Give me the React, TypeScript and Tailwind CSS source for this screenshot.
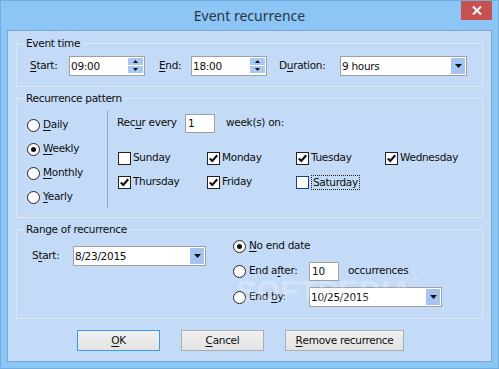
import React from "react";

const U = ({ children }: { children: React.ReactNode }) => (
  <span className="underline underline-offset-[2px] decoration-[1px]">{children}</span>
);

const Radio = ({ checked = false }: { checked?: boolean }) => (
  <span className="w-[13px] h-[13px] shrink-0 rounded-full border border-[#222] bg-white flex items-center justify-center">
    {checked && <span className="w-[5px] h-[5px] rounded-full bg-[#111]" />}
  </span>
);

const Check = ({ checked = false, focus = false }: { checked?: boolean; focus?: boolean }) => (
  <span
    className={`w-[13px] h-[13px] shrink-0 border bg-white flex items-center justify-center ${
      focus ? "border-[#1c3f94]" : "border-[#222]"
    }`}
  >
    {checked && (
      <svg width="11" height="11" viewBox="0 0 11 11">
        <path d="M1.8 5.4 L4.3 8 L9.2 2.2" fill="none" stroke="#111" strokeWidth="2.1" />
      </svg>
    )}
  </span>
);

const Arrow = ({ up = false, w = 7, h = 4 }: { up?: boolean; w?: number; h?: number }) => (
  <svg width={w} height={h} viewBox={`0 0 ${w} ${h}`}>
    {up ? (
      <polygon points={`0,${h} ${w},${h} ${w / 2},0`} fill="#111" />
    ) : (
      <polygon points={`0,0 ${w},0 ${w / 2},${h}`} fill="#111" />
    )}
  </svg>
);

const SpinBox = ({ value }: { value: string }) => (
  <div className="w-[76px] h-[20px] border border-[#a0a0a0] bg-white flex items-stretch">
    <span className="flex-1 pl-[1px] leading-[18px]">{value}</span>
    <div className="w-[15px] mr-[1px] pt-[1px] flex flex-col gap-[1px]">
      <span className="h-[7px] bg-[#a9c9f3] flex items-center justify-center">
        <Arrow up w={5} h={3} />
      </span>
      <span className="h-[7px] bg-[#a9c9f3] flex items-center justify-center">
        <Arrow w={5} h={3} />
      </span>
    </div>
  </div>
);

const Combo = ({ value, w }: { value: string; w: string }) => (
  <div className={`${w} h-[20px] border border-[#a0a0a0] bg-white flex items-stretch`}>
    <span className="flex-1 pl-[1px] leading-[18px]">{value}</span>
    <span className="w-[14px] my-[1px] mr-[1px] bg-[#a5c4f2] flex items-center justify-center">
      <Arrow w={7} h={4} />
    </span>
  </div>
);

const TextBox = ({ value, w }: { value: string; w: string }) => (
  <div className={`${w} h-[19px] border border-[#a0a0a0] bg-white pl-[2px] leading-[17px]`}>{value}</div>
);

const Group = ({ title, className, children }: { title: string; className: string; children: React.ReactNode }) => (
  <div className={`relative border border-[#dde7f3] ${className}`}>
    <span className="absolute -top-[8px] left-[7px] px-[2px] bg-[#c4dbf8] leading-[14px]">{title}</span>
    {children}
  </div>
);

const Button = ({ children, w, def = false }: { children: React.ReactNode; w: string; def?: boolean }) => (
  <div
    className={`${w} h-[21px] border bg-gradient-to-b from-[#f0f0f0] to-[#e3e3e3] flex items-center justify-center ${
      def ? "border-[#3c98f0]" : "border-[#acacac]"
    }`}
  >
    {children}
  </div>
);

export default function App() {
  const days: { name: string; checked: boolean; focus?: boolean }[] = [
    { name: "Sunday", checked: false },
    { name: "Monday", checked: true },
    { name: "Tuesday", checked: true },
    { name: "Wednesday", checked: true },
    { name: "Thursday", checked: true },
    { name: "Friday", checked: true },
    { name: "Saturday", checked: false, focus: true },
  ];

  return (
    <div className="relative w-[499px] h-[369px] bg-[#8cc6f6] border border-[#74aedf] flex flex-col overflow-hidden font-['DejaVu_Sans',sans-serif] text-[10.5px] tracking-[-0.3px] text-[#0d0d0d]">
      {/* Title bar */}
      <div className="h-[29px] flex items-center justify-center font-['Noto_Sans',sans-serif] text-[14px] tracking-normal text-[#2a3542]">
        Event recurrence
      </div>
      <div className="absolute -top-[1px] right-[6px] w-[31px] h-[20px] bg-[#c75050] flex items-center justify-center">
        <svg width="10" height="9" viewBox="0 0 10 9">
          <path d="M1 0.5 L9 8.5 M9 0.5 L1 8.5" stroke="#fff" strokeWidth="2" />
        </svg>
      </div>

      {/* Client area */}
      <div className="relative flex-1 mx-[6px] mb-[6px] border border-[#7ba4d2] bg-[#c4dbf8] px-[8px] pt-[12px] flex flex-col">
        {/* Event time */}
        <Group title="Event time" className="h-[44px] pt-[12px] pl-[13px]">
          <div className="flex items-center h-[20px]">
            <span className="w-[39px]">
              <U>S</U>tart:
            </span>
            <SpinBox value="09:00" />
            <span className="ml-[14px] w-[32px]">
              <U>E</U>nd:
            </span>
            <SpinBox value="18:00" />
            <span className="ml-[12px] w-[61px]">
              D<U>u</U>ration:
            </span>
            <Combo value="9 hours" w="w-[127px]" />
          </div>
        </Group>

        {/* Recurrence pattern */}
        <Group title="Recurrence pattern" className="mt-[11px] h-[120px] flex items-start">
          <div className="w-[90px] pt-[14px] pl-[10px] flex flex-col">
            {[
              ["D", "aily", false],
              ["W", "eekly", true],
              ["M", "onthly", false],
              ["Y", "early", false],
            ].map(([a, rest, c]) => (
              <div key={a as string} className="h-[24px] flex items-center gap-[3px]">
                <Radio checked={c as boolean} />
                <span>
                  <U>{a as string}</U>
                  {rest as string}
                </span>
              </div>
            ))}
          </div>
          <div className="mt-[12px] w-px h-[97px] bg-[#8ea3bf]" />
          <div className="pl-[9px] pt-[14px] flex flex-col">
            <div className="h-[20px] flex items-center">
              <span className="w-[68px]">
                Rec<U>u</U>r every
              </span>
              <TextBox value="1" w="w-[30px]" />
              <span className="ml-[11px]">week(s) on:</span>
            </div>
            <div className="mt-[13px] ml-[1px] grid grid-cols-[89px_89px_89px_auto]">
              {days.map((d) => (
                <div key={d.name} className="h-[24px] flex items-center gap-[2px]">
                  <Check checked={d.checked} focus={d.focus} />
                  {d.focus ? (
                    <span className="border border-dotted border-[#222] px-[1px] leading-[13px]">{d.name}</span>
                  ) : (
                    <span>{d.name}</span>
                  )}
                </div>
              ))}
            </div>
          </div>
        </Group>

        {/* Range of recurrence */}
        <Group title="Range of recurrence" className="mt-[11px] h-[90px] flex items-start">
          <div className="pl-[15px] pt-[16px] flex items-center">
            <span className="w-[41px]">
              S<U>t</U>art:
            </span>
            <Combo value="8/23/2015" w="w-[133px]" />
          </div>
          <div className="ml-[27px] pt-[4px] flex flex-col">
            <div className="h-[24px] flex items-center gap-[3px]">
              <Radio checked />
              <span>
                <U>N</U>o end date
              </span>
            </div>
            <div className="h-[26px] flex items-center">
              <div className="w-[76px] flex items-center gap-[3px]">
                <Radio />
                <span>
                  End a<U>f</U>ter:
                </span>
              </div>
              <TextBox value="10" w="w-[30px]" />
              <span className="ml-[9px]">occurrences</span>
            </div>
            <div className="h-[26px] flex items-center">
              <div className="w-[76px] flex items-center gap-[3px]">
                <Radio />
                <span>
                  End <U>b</U>y:
                </span>
              </div>
              <Combo value="10/25/2015" w="w-[133px]" />
            </div>
          </div>
        </Group>

        {/* Buttons */}
        <div className="mt-[11px] ml-[61px] flex gap-[21px]">
          <Button w="w-[83px]" def>
            <U>O</U>K
          </Button>
          <Button w="w-[83px]">
            <U>C</U>ancel
          </Button>
          <Button w="w-[119px]">
            <U>R</U>emove recurrence
          </Button>
        </div>

        {/* Watermark */}
        <div className="absolute left-[228px] top-[245px] pointer-events-none font-['Liberation_Sans',sans-serif] font-bold text-[30px] leading-none tracking-[0.5px] text-white/25">
          SOFTPEDIA<span className="text-[9px] align-top">®</span>
        </div>
      </div>
    </div>
  );
}
